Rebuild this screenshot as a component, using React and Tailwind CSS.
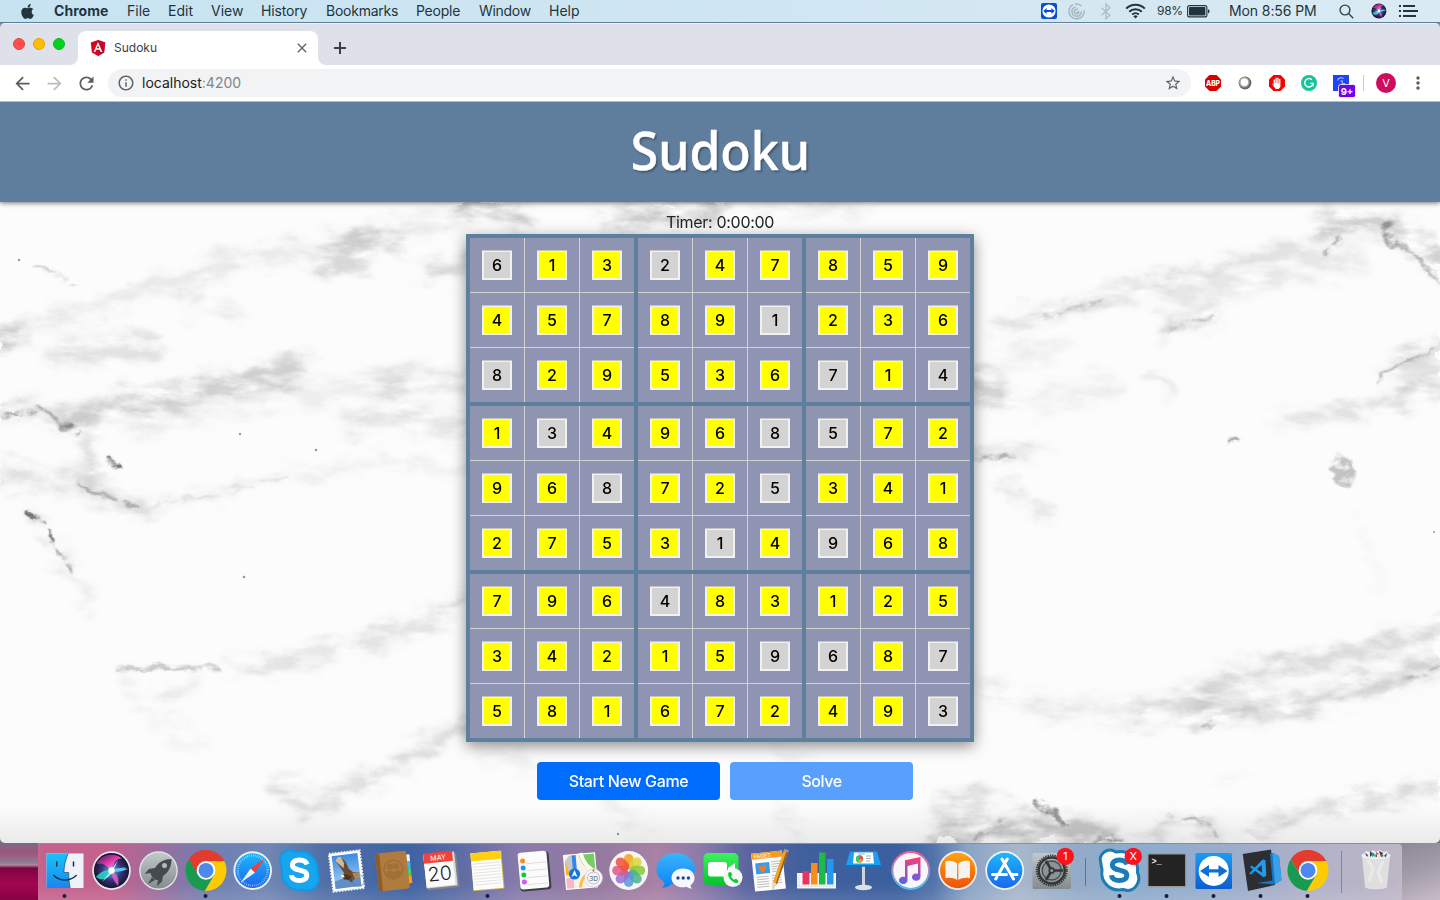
import React from 'react';
import { FaApple } from 'react-icons/fa';
import {
  MdArrowBack,
  MdArrowForward,
  MdRefresh,
  MdInfoOutline,
  MdStarBorder,
  MdMoreVert,
  MdClose,
} from 'react-icons/md';

const ROWS = [
  '613247859',
  '457891236',
  '829536714',
  '134968572',
  '968725341',
  '275314968',
  '796483125',
  '342159687',
  '581672493',
];

// g = given clue, . = solved cell
const CLUES = [
  'g..g.....',
  '.....g...',
  'g.....g.g',
  '.g...gg..',
  '..g..g...',
  '....g.g..',
  '...g.....',
  '.....gg.g',
  '........g',
];

const TRIPLE = [0, 1, 2];

function MenuBar() {
  return (
    <div className="flex h-[23px] items-center border-b border-[#5f7f9b] bg-gradient-to-r from-[#c7e3f1] via-[#cfe6f2] to-[#d9eaf2] text-[14px] leading-[22px] text-[#1d3541]">
      <div className="flex w-[54px] pl-5">
        <FaApple className="h-[17px] w-[15px] text-[#22353f]" />
      </div>
      <span className="w-[73px] font-bold tracking-[0.05px]">Chrome</span>
      <span className="w-[41px]">File</span>
      <span className="w-[43px]">Edit</span>
      <span className="w-[50px]">View</span>
      <span className="w-[65px] tracking-[-0.15px]">History</span>
      <span className="w-[90px] tracking-[-0.25px]">Bookmarks</span>
      <span className="w-[63px] tracking-[-0.25px]">People</span>
      <span className="w-[70px] tracking-[-0.3px]">Window</span>
      <span>Help</span>
      <div className="ml-auto flex h-[22px] items-center">
        <svg width="16" height="16" viewBox="0 0 16 16">
          <rect width="16" height="16" rx="2" fill="#0b4fd0" />
          <circle cx="8" cy="8" r="6.6" fill="#fff" />
          <path d="M2.2 8 5.6 5v2h4.8V5l3.4 3-3.4 3V9H5.6v2z" fill="#0b4fd0" />
        </svg>
        <svg className="ml-[11px]" width="17" height="17" viewBox="0 0 17 17" fill="none" stroke="#a7b8c2" strokeWidth="1.5" strokeLinecap="round">
          <path d="M4.500 1.800a7.600 7.600 0 1 0 11.700 6.200" />
          <path d="M7 4.100a4.700 4.700 0 1 0 6.300 5" />
          <path d="M9.500 6.500a2.300 2.300 0 1 0 1.300 2.500h-2" />
          <path d="M7.500 1.100a7.200 7.200 0 0 1 5.500 1.500" />
        </svg>
        <svg className="ml-[15px]" width="12" height="17" viewBox="0 0 12 17" fill="none" stroke="#aabcc6" strokeWidth="1.2">
          <path d="m1.5 4.7 8.4 7.6L6 15.8V1.2l3.9 3.5-8.4 7.6" />
        </svg>
        <svg className="ml-[13px]" width="21" height="16" viewBox="0 0 21 16" fill="none" stroke="#22353f" strokeWidth="2">
          <path d="M1.2 5.6a13.2 13.2 0 0 1 18.6 0" />
          <path d="M4.2 8.7a9 9 0 0 1 12.6 0" />
          <path d="M7.2 11.5a4.8 4.8 0 0 1 6.6 0" />
          <path d="M10.5 15.6 8.4 13.4a3 3 0 0 1 4.2 0z" fill="#22353f" stroke="none" />
        </svg>
        <span className="ml-[11px] w-[30px] text-[12px] tracking-[-0.3px]">98%</span>
        <svg width="24" height="13" viewBox="0 0 24 13">
          <rect x=".6" y=".6" width="19.3" height="11.3" rx="2" fill="none" stroke="#22353f" strokeWidth="1.1" />
          <rect x="2" y="2" width="16.4" height="8.5" rx=".8" fill="#22353f" />
          <path d="M21 4.2c2 .6 2 3.6 0 4.2z" fill="#22353f" />
        </svg>
        <span className="ml-[18px] w-[110px] tracking-[-0.1px]">Mon 8:56 PM</span>
        <svg width="15" height="15" viewBox="0 0 15 15" fill="none" stroke="#33454f" strokeWidth="1.4">
          <circle cx="6" cy="6" r="4.9" />
          <path d="m9.6 9.6 4.6 4.6" />
        </svg>
        <svg className="ml-[17px]" width="16" height="16" viewBox="5 8 37.500 37.500">
          <SiriBall />
        </svg>
        <svg className="ml-[12px] mr-[22px]" width="19" height="12" viewBox="0 0 19 12" fill="#22353f">
          <path d="M0 0h2v2H0zM0 5h2v2H0zM0 10h2v2H0zM4 0h12v2H4zM4 5h15v2H4zM4 10h13v2H4z" />
        </svg>
      </div>
    </div>
  );
}

function TabStrip() {
  return (
    <div className="flex h-[42px] rounded-t-[5px] border-t border-[#eef0f3] bg-[#dee1e9]">
      <div className="flex w-[70px] items-center gap-2 pb-[1px] pl-[13px]">
        <span className="h-3 w-3 rounded-full border border-[#e2463f] bg-[#ff4f48]" />
        <span className="h-3 w-3 rounded-full border border-[#e0a500] bg-[#ffbd00]" />
        <span className="h-3 w-3 rounded-full border border-[#14b81f] bg-[#00d31f]" />
      </div>
      <svg className="mt-auto" width="8" height="8" viewBox="0 0 8 8">
        <path d="M8 0v8H0a8 8 0 0 0 8-8z" fill="#fff" />
      </svg>
      <div className="mt-[7px] flex w-[240px] items-center rounded-t-lg bg-white pl-3 pr-[8px]">
        <svg width="16" height="16" viewBox="0 0 16 16">
          <path d="m8 0 7.2 2.6-1.1 9.8L8 16l-6.1-3.6L.8 2.6z" fill="#e0001f" />
          <path d="m8 0 7.2 2.6-1.1 9.8L8 16z" fill="#bd0a2c" />
          <path d="M8 2 3.6 12h1.8l.9-2.300h3.400l.9 2.300h1.800zm0 3.300 1.200 3H6.800z" fill="#fff" />
        </svg>
        <span className="ml-2 text-[12px] text-[#3c4043]">Sudoku</span>
        <MdClose className="ml-auto h-4 w-4 text-[#5f6368]" />
      </div>
      <svg className="mt-auto" width="8" height="8" viewBox="0 0 8 8">
        <path d="M0 0v8h8a8 8 0 0 1-8-8z" fill="#fff" />
      </svg>
      <div className="flex items-center pl-2 pt-[7px]">
        <svg width="12" height="12" viewBox="0 0 12 12">
          <path d="M5 0h2v5h5v2H7v5H5V7H0V5h5z" fill="#3c4043" />
        </svg>
      </div>
    </div>
  );
}

function Slot({ children }) {
  return <div className="flex w-8 items-center justify-center">{children}</div>;
}

function Toolbar() {
  return (
    <div className="flex h-[37px] border-b border-[#b9bcc0] bg-white px-[6px]">
      <Slot><MdArrowBack className="h-[21px] w-[21px] text-[#5a5d61]" /></Slot>
      <Slot><MdArrowForward className="h-[21px] w-[21px] text-[#bbbdbf]" /></Slot>
      <Slot><MdRefresh className="h-[21px] w-[21px] text-[#5a5d61]" /></Slot>
      <div className="mx-[6px] mt-1 flex h-7 flex-1 items-center rounded-full bg-[#f1f3f4] pl-[9px] pr-[9px]">
        <MdInfoOutline className="h-[18px] w-[18px] text-[#5f6368]" />
        <span className="ml-[7px] pb-[1px] text-[14px] leading-5 text-[#202124]">
          localhost<span className="text-[#80868b]">:4200</span>
        </span>
        <MdStarBorder className="ml-auto h-[18px] w-[18px] text-[#5f6368]" />
      </div>
      <Slot>
        <svg width="18" height="18" viewBox="0 0 18 18">
          <path d="M5.5 1h7L17 5.500v7L12.500 17h-7L1 12.500v-7z" fill="#d70000" />
          <text x="9" y="11.700" textAnchor="middle" fontSize="7.200" fontWeight="800" fill="#fff" textLength="14" lengthAdjust="spacingAndGlyphs">ABP</text>
        </svg>
      </Slot>
      <Slot>
        <svg width="14" height="14" viewBox="0 0 14 14">
          <circle cx="7" cy="7" r="6.400" fill="#666" />
          <circle cx="6.300" cy="6.300" r="5.200" fill="#a9a9a9" />
          <circle cx="6.400" cy="6.200" r="3.700" fill="#fff" />
        </svg>
      </Slot>
      <Slot>
        <svg width="18" height="18" viewBox="0 0 18 18">
          <path d="M5.500 1h7L17 5.500v7L12.500 17h-7L1 12.500v-7z" fill="#f60000" />
          <path d="M5.600 13V5.500h1.300V9h.5V3.800h1.400V9h.5V3.800h1.300V9h.5V5h1.300v8L10.600 15H7.800L4.600 11V8.600z" fill="#fff" />
        </svg>
      </Slot>
      <Slot>
        <svg width="16" height="16" viewBox="0 0 16 16">
          <circle cx="8" cy="8" r="8" fill="#15c39a" />
          <path d="M10.800 4.700a4.200 4.200 0 1 0 1.300 3.700H9.200m2.900 0v2.800" fill="none" stroke="#fff" strokeWidth="1.400" />
        </svg>
      </Slot>
      <Slot>
        <svg className="overflow-visible" width="16" height="16" viewBox="0 0 16 16">
          <rect width="16" height="16" fill="#1d45f5" />
          <path d="M4.500 5.500C5 3 8 2 10.500 3.500M7.500 6h1.700v5M10 8.500h2" fill="none" stroke="#b5c6ff" strokeWidth="1.100" />
          <rect x="5.500" y="9.500" width="17" height="13" rx="2" fill="#7400f0" stroke="#fff" strokeWidth=".8" />
          <text x="14" y="19.800" textAnchor="middle" fontSize="9.500" fontWeight="700" fill="#fff">9+</text>
        </svg>
      </Slot>
      <div className="flex w-[13px] items-center justify-center">
        <span className="h-4 w-px bg-[#c9cbce]" />
      </div>
      <Slot>
        <span className="flex h-5 w-5 items-center justify-center rounded-full bg-[#d00a5c] text-[11px] text-white">V</span>
      </Slot>
      <Slot><MdMoreVert className="h-[20px] w-[20px] text-[#5a5d61]" /></Slot>
    </div>
  );
}

// Veined stone texture behind the page content
function Marble() {
  return (
    <svg className="absolute inset-0 h-full w-full" viewBox="0 202 1440 641" preserveAspectRatio="none">
      <defs>
        <filter id="cloud" x="0" y="202" width="1440" height="641" filterUnits="userSpaceOnUse" colorInterpolationFilters="sRGB">
          <feTurbulence type="fractalNoise" baseFrequency="0.03 0.05" numOctaves="6" seed="8" result="n" />
          <feGaussianBlur in="SourceGraphic" stdDeviation="6" result="b" />
          <feDisplacementMap in="b" in2="n" scale="32" xChannelSelector="R" yChannelSelector="G" result="d" />
          <feTurbulence type="fractalNoise" baseFrequency="0.03 0.08" numOctaves="6" seed="21" result="g" />
          <feColorMatrix in="g" type="matrix" values="0 0 0 0 0  0 0 0 0 0  0 0 0 0 0  0 0 2.3 0 -0.5" result="m" />
          <feComposite in="d" in2="m" operator="in" />
        </filter>
        <filter id="vein" x="0" y="202" width="1440" height="641" filterUnits="userSpaceOnUse" colorInterpolationFilters="sRGB">
          <feTurbulence type="fractalNoise" baseFrequency="0.06 0.09" numOctaves="4" seed="3" result="n" />
          <feGaussianBlur in="SourceGraphic" stdDeviation="1.1" result="b" />
          <feDisplacementMap in="b" in2="n" scale="12" xChannelSelector="R" yChannelSelector="G" result="d" />
          <feColorMatrix in="n" type="matrix" values="0 0 0 0 0  0 0 0 0 0  0 0 0 0 0  0 0 3.5 0 -1" result="m" />
          <feComposite in="d" in2="m" operator="in" />
        </filter>
        <linearGradient id="foot" x1="0" y1="0" x2="0" y2="1">
          <stop offset="0" stopColor="#000" stopOpacity="0" />
          <stop offset="1" stopColor="#000" stopOpacity=".07" />
        </linearGradient>
      </defs>
      <rect y="202" width="1440" height="641" fill="#fcfcfc" />
      <g filter="url(#cloud)" opacity=".85" fill="none" stroke="#959595" strokeLinecap="round" strokeLinejoin="round">
        <g transform="translate(0 -50) scale(1 1.263)">
          <path d="M0 307 26 300" strokeWidth="15" opacity=".6" />
          <path d="M45 293 100 283 190 258 240 245 330 232 466 212" strokeWidth="14" opacity=".24" />
          <path d="M55 318 150 315" strokeWidth="22" opacity=".3" />
          <path d="M325 243 355 246M360 230 390 232" strokeWidth="26" opacity=".42" />
          <path d="M425 255 466 248" strokeWidth="14" opacity=".45" />
          <path d="M195 275 230 285" strokeWidth="18" opacity=".2" />
          <path d="M0 366 40 362 75 377" strokeWidth="9" opacity=".5" />
          <path d="M75 368 150 358 225 342 275 338 305 328" strokeWidth="20" opacity=".5" />
          <path d="M130 375 200 365 300 350 400 340" strokeWidth="22" opacity=".16" />
          <path d="M350 372 410 370 466 380M380 345 466 340" strokeWidth="20" opacity=".25" />
          <path d="M0 415 60 418 100 430 140 441" strokeWidth="18" opacity=".3" />
          <path d="M86 385 90 425" strokeWidth="16" opacity=".35" />
          <path d="M28 448 50 465 72 492 90 520" strokeWidth="12" opacity=".2" />
          <path d="M140 441 210 432 290 415 370 407 466 410" strokeWidth="7" opacity=".24" />
          <path d="M240 568 280 564 345 553 430 530 466 512" strokeWidth="14" opacity=".3" />
          <path d="M165 592 195 580" strokeWidth="12" opacity=".25" />
          <path d="M275 657 305 685 360 660 430 630 466 612" strokeWidth="12" opacity=".42" />
          <path d="M290 655 320 665M120 570 150 610 200 628" strokeWidth="10" opacity=".16" />
          <path d="M1000 296 1090 278 1140 265 1220 250 1320 230 1360 215" strokeWidth="10" opacity=".38" />
          <path d="M1140 272 1220 268 1300 250 1360 245" strokeWidth="20" opacity=".24" />
          <path d="M1160 300 1215 287" strokeWidth="13" opacity=".45" />
          <path d="M1325 218 1390 214 1440 245" strokeWidth="20" opacity=".5" />
          <path d="M975 345 1000 350" strokeWidth="28" opacity=".45" />
          <path d="M1010 325 1060 310M1030 358 1110 345" strokeWidth="18" opacity=".16" />
          <path d="M975 400 1040 396M1003 424 1045 447" strokeWidth="9" opacity=".36" />
          <path d="M1155 335 1174 353" strokeWidth="5" opacity=".5" />
          <path d="M1280 374 1360 362 1440 350" strokeWidth="13" opacity=".32" />
          <path d="M1385 332 1440 316M1405 348 1440 335" strokeWidth="16" opacity=".38" />
          <path d="M1358 455 1385 508" strokeWidth="6" opacity=".13" />
          <path d="M975 578 1050 600 1150 605" strokeWidth="15" opacity=".22" />
          <path d="M1140 602 1200 590 1240 573 1340 560 1440 538" strokeWidth="18" opacity=".4" />
          <path d="M1195 605 1280 602 1350 587 1440 565" strokeWidth="18" opacity=".48" />
          <path d="M1210 595 1260 590" strokeWidth="22" opacity=".18" />
        </g>
        <path d="M470 205 520 218M610 222 715 210" strokeWidth="24" opacity=".55" />
        <path d="M760 213 860 207" strokeWidth="12" opacity=".22" />
        <path d="M480 745 540 770M600 795 650 830M780 745 810 760M780 808 800 835" strokeWidth="11" opacity=".2" />
        <path d="M940 838 985 824 1060 830 1110 842" strokeWidth="26" opacity=".62" />
        <path d="M935 808 985 798" strokeWidth="16" opacity=".42" />
        <path d="M1145 838 1175 825 1215 833" strokeWidth="18" opacity=".36" />
        <path d="M1250 835 1320 808 1400 795 1440 786" strokeWidth="13" opacity=".5" />
        <path d="M1225 778 1245 772" strokeWidth="8" opacity=".15" />
      </g>
      <g filter="url(#vein)" fill="none" stroke="#555" strokeLinecap="round">
        <g transform="translate(0 -50) scale(1 1.263)">
          <path d="M0 370 38 362 58 372 77 381" strokeWidth="3" opacity=".45" />
          <path d="M60 376 76 381" strokeWidth="5" opacity=".5" />
          <path d="M34 250 75 264" strokeWidth="2.500" opacity=".3" />
          <path d="M28 446 50 460 52 468" strokeWidth="3" opacity=".95" />
          <path d="M52 468 72 492" strokeWidth="3" opacity=".5" />
          <path d="M109 402 119 410" strokeWidth="3.500" opacity=".95" />
          <path d="M80 423 100 431 140 442" strokeWidth="3" opacity=".42" />
          <path d="M140 442 210 432 290 417" strokeWidth="2.500" opacity=".14" />
          <path d="M118 568 150 568 220 568" strokeWidth="3.500" opacity=".32" />
          <path d="M1045 291 1100 278M1170 302 1215 288" strokeWidth="3" opacity=".3" />
          <path d="M1387 220 1392 232" strokeWidth="11" opacity=".5" />
          <path d="M1395 230 1420 245 1440 266M1325 240 1340 228" strokeWidth="3.500" opacity=".38" />
          <path d="M1378 342 1385 332 1420 322 1440 312" strokeWidth="2.500" opacity=".4" />
          <path d="M975 403 1012 400" strokeWidth="4" opacity=".38" />
          <path d="M1228 389 1234 387 1239 388" strokeWidth="2" opacity=".7" />
          <path d="M1341 410 1346 416" strokeWidth="20" opacity=".34" />
          <path d="M1205 614 1212 613M1405 577 1440 568" strokeWidth="4" opacity=".3" />
        </g>
        <path d="M1036 802 1055 812 1062 826" strokeWidth="6" opacity=".6" />
        <path d="M1170 815 1200 820 1215 833M1095 842 1118 838" strokeWidth="4" opacity=".4" />
        <path d="M975 838 1000 822" strokeWidth="4" opacity=".35" />
      </g>
      <g fill="#999">
        <circle cx="19" cy="260" r="1.200" /><circle cx="244" cy="577" r="1.300" />
        <circle cx="316" cy="450" r="1.300" /><circle cx="240" cy="434" r="1.200" />
        <circle cx="618" cy="834" r="1.200" /><circle cx="1434" cy="532" r="1" />
      </g>
      <rect y="805" width="1440" height="38" fill="url(#foot)" />
    </svg>
  );
}

function Cell({ value, given }) {
  return (
    <div className="flex h-[54px] w-[54px] items-center justify-center bg-[#9094b3]">
      <div className="h-[30px] w-[30px] border-t border-[#c3c3c3]">
        <div
          className={
            'flex h-[29px] items-center justify-center border-2 border-t border-[#f1f1f1] text-[16px] font-medium text-black ' +
            (given ? 'bg-[#d3d3d3]' : 'bg-[#ffff00]')
          }
        >
          {value}
        </div>
      </div>
    </div>
  );
}

function Board() {
  return (
    <div className="grid w-[508px] grid-cols-3 gap-1 bg-[#5f7f9e] p-1 shadow-[0_4px_14px_rgba(0,0,0,0.45)]">
      {TRIPLE.map((br) =>
        TRIPLE.map((bc) => (
          <div key={br + '-' + bc} className="grid grid-cols-3 gap-px bg-[#d3d3d3]">
            {TRIPLE.map((r) =>
              TRIPLE.map((c) => {
                const row = br * 3 + r;
                const col = bc * 3 + c;
                return <Cell key={row + '-' + col} value={ROWS[row][col]} given={CLUES[row][col] === 'g'} />;
              })
            )}
          </div>
        ))
      )}
    </div>
  );
}

function Page() {
  return (
    <div className="relative flex h-[741px] flex-col overflow-hidden rounded-b-[5px]">
      <div className="relative z-10 flex h-[100px] items-center justify-center bg-[#5f7d9c] pb-[3px] shadow-[0_1px_5px_rgba(0,0,0,0.55)]">
        <h1 className="scale-x-[0.95] font-['Noto_Sans','Open_Sans',sans-serif] text-[52.5px] font-medium leading-none text-white [-webkit-text-stroke:0.5px_white] [text-shadow:2px_2px_2px_rgba(0,0,0,0.3)]">
          Sudoku
        </h1>
      </div>
      <div className="relative flex flex-1 flex-col items-center">
        <Marble />
        <div className="relative flex h-8 items-center pt-2 text-[16px] leading-6 tracking-[-0.3px] text-[#212529]">Timer: 0:00:00</div>
        <div className="relative">
          <Board />
        </div>
        <div className="relative mt-5 flex gap-[10px] pl-[10px] text-[16px] font-medium text-white">
          <button className="h-[38px] w-[183px] rounded bg-[#006dff] tracking-[-0.35px]">Start New Game</button>
          <button className="h-[38px] w-[183px] rounded bg-[#006dff]/65 tracking-[-0.45px]">Solve</button>
        </div>
      </div>
    </div>
  );
}

function SiriBall() {
  return (
    <g>
      <defs>
        <radialGradient id="siri" cx=".5" cy=".5" r=".5">
          <stop offset="0" stopColor="#5fb8dc" /><stop offset=".55" stopColor="#39337c" /><stop offset="1" stopColor="#15142f" />
        </radialGradient>
        <linearGradient id="siriPink" x1="0" y1="0" x2="1" y2="1">
          <stop offset="0" stopColor="#3a1b5c" /><stop offset=".5" stopColor="#ff3bb4" /><stop offset="1" stopColor="#c9f6ff" />
        </linearGradient>
      </defs>
      <circle cx="23.500" cy="26.600" r="19.300" fill="#e9e9ee" />
      <circle cx="23.500" cy="26.600" r="17.600" fill="url(#siri)" />
      <path d="M9 20C12 10 28 8 34 15c-6-1-8 4-11 12C19 21 14 18 9 20z" fill="url(#siriPink)" opacity=".9" />
      <path d="M8 33c6-8 14-7 30-10-6 4-10 4-14 5-4 7-9 10-16 5z" fill="#2adcc6" opacity=".85" />
      <path d="M23 27c6 2 9 8 7 15-3-4-7-9-7-15z" fill="#f062d0" opacity=".8" />
      <path d="M23 27c5-3 11-4 17-2-6 2-10 4-17 2z" fill="#61c6ff" />
      <circle cx="23.500" cy="26.500" r="3.200" fill="#fff" opacity=".95" />
      <path d="m23 27-9 11 10-9zM23 26l7-10-5 11z" fill="#fff" opacity=".75" />
    </g>
  );
}

const Finder = () => (
  <g>
    <path d="M5.500 9.500h37v34.400h-37z" fill="#eef2f8" />
    <path d="M5.500 9.500h21.700c-2.600 6-4 12-4.300 19h4.800c0 5 .3 10 1.500 15.400H5.500z" fill="url(#finder)" />
    <path d="M27.200 9.500c-2.600 6-4 12-4.300 19h4.800c0 5 .3 10 1.500 15.400" fill="none" stroke="#173b60" strokeWidth=".6" />
    <path d="M15.700 18v4M32.500 18v4M12.800 31.500c6 6 16 6 22.400 0" fill="none" stroke="#15304d" strokeWidth="1.500" strokeLinecap="round" />
  </g>
);

const Rocket = () => (
  <g>
    <circle cx="23.500" cy="26.600" r="19.300" fill="#e3e7e8" />
    <circle cx="23.500" cy="26.600" r="18" fill="url(#silver)" />
    <path d="M36.500 15c-7 0-13 3-16.500 9l-6 1-4.500 5 6-1 1 3 3.500 3.500 3 .8-1 6 5-4.700 1-5.500c6-4 8.500-10 8.500-17.100z" fill="#454a4e" />
    <path d="m17 33-4 7 7-4z" fill="#454a4e" />
    <circle cx="29.500" cy="21.500" r="2.500" fill="#b5bcbf" />
  </g>
);

const Chrome = () => (
  <g transform="translate(24 26.400)">
    <path d="M18.300-9.200A20.500 20.500 0 0 0-17.100-11.300L-8 4.600 0-9.200z" fill="#e33b2e" />
    <path d="M18.300-9.200A20.500 20.500 0 0 0-17.100-11.300L-8 4.600 0-9.200z" fill="#fdcb02" transform="rotate(120)" />
    <path d="M18.300-9.200A20.500 20.500 0 0 0-17.100-11.300L-8 4.600 0-9.200z" fill="#189a50" transform="rotate(240)" />
    <circle r="9.300" fill="#fff" />
    <circle r="7.500" fill="#4b88f0" />
  </g>
);

const Safari = () => (
  <g>
    <circle cx="23.700" cy="26.600" r="19.300" fill="#eef0f3" />
    <circle cx="23.700" cy="26.600" r="17.400" fill="url(#blueBall)" />
    <circle cx="23.700" cy="26.600" r="15" fill="none" stroke="#d3efff" strokeWidth="2.200" strokeDasharray=".6 1.360" opacity=".8" />
    <path d="M35.800 14.500 21.600 24.400l4.300 4.300z" fill="#fb3b30" />
    <path d="M11.600 38.700 21.600 24.400l4.300 4.300z" fill="#f3f3f3" />
  </g>
);

const SkypeBlob = ({ fill, stroke, letter, strokeWidth }) => (
  <g>
    <path
      d="M5 20C1.500 9 12 3 20 8c13-3 23 8 21.500 20.500C46 38 38 49.500 27 45.500 14 48 4 38 6 25.500 5.500 23 5 21.500 5 20z"
      fill={fill}
      stroke={stroke}
      strokeWidth={strokeWidth}
    />
    <path d="M31 20.500c-1-3.300-4-4.600-7.600-4.600-4.200 0-7 2-7 5.200 0 6.600 14.400 3.400 14.400 10.100 0 3.600-3.200 5.300-7.400 5.300-4.400 0-7.600-2-8-5.300" fill="none" stroke={letter} strokeWidth="5" />
  </g>
);

const MailStamp = () => (
  <g transform="rotate(-7 23.500 27)">
    <path d="M8 8h31v38H8z" fill="#fff" stroke="#f4f4f4" strokeWidth="2" strokeDasharray="1.700 1.300" />
    <path d="M10.500 10.500h26v33h-26z" fill="url(#sky)" />
    <path d="M10.500 36c9-2 18-3 26-2v9.500h-26z" fill="#5f8fc5" />
    <path d="M14 16c1-4 4-5 6-3l4 5 2 7 4 4 6 1-1 5-5 1-3 3-3-3-4-1-3-4 4-2-3-6z" fill="#6b4b30" />
    <path d="M14 16c1-4 4-5 6-3l2 6-1 5z" fill="#cdbb9f" />
    <path d="m18 31 4-1 6 3-3 3-5-1z" fill="#4a3220" />
    <path d="m17 30 3 0 1 3-3 0z" fill="#f6f0e2" />
    <path d="m29 30 7 0-1 5-4 1z" fill="#c08b45" />
    <circle cx="34" cy="38" r="6" fill="none" stroke="#56739d" strokeWidth="1" opacity=".5" />
  </g>
);

const Contacts = () => (
  <g transform="rotate(-6 23.500 27)">
    <path d="M36 12h5v7h-5z" fill="#f4f4f4" /><path d="M36 19h5v7h-5z" fill="#38bdf0" />
    <path d="M36 26h5v7h-5z" fill="#4ccf6b" /><path d="M36 33h5v8h-5z" fill="#ff9e1b" />
    <rect x="7" y="8" width="31" height="38" rx="2" fill="#b07b3e" />
    <path d="M7 10c0-1 1-2 2-2h2v38H9c-1 0-2-1-2-2z" fill="#8c5d2a" />
    <circle cx="23.500" cy="25.500" r="9.500" fill="none" stroke="#996a34" strokeWidth="1" />
    <circle cx="20.500" cy="22.500" r="3" fill="#a07136" /><circle cx="26.500" cy="22.500" r="3" fill="#a07136" />
    <path d="M15 31c1-6 9-6 9-1 1-5 8-4 8 1-4 5-13 5-17 0z" fill="#a07136" />
  </g>
);

const Calendar = () => (
  <g transform="rotate(-6 23.500 27)">
    <path d="M9 11h32v34H9z" fill="#7d8389" />
    <path d="M8 9h31v34H8z" fill="#d9dcdf" />
    <path d="M8 9h29v33H8z" fill="#fafafa" />
    <path d="M8 8h29v10H8z" fill="#f2423c" />
    <text x="22.500" y="15.900" textAnchor="middle" fontSize="7.200" fill="#fff">MAY</text>
    <text x="22.500" y="36.500" textAnchor="middle" fontSize="19.500" fontWeight="300" fill="#222">20</text>
  </g>
);

const Notes = () => (
  <g transform="rotate(-5 23.500 27)">
    <path d="M8 8h31v38H8z" fill="#d2b24a" />
    <path d="M8 8h30v37H8z" fill="#fdfdfb" />
    <path d="M8 8h30v8H8z" fill="#ffcf10" />
    <path d="M9 19h28M9 22h28M9 25h28M9 28h28M9 31h28M9 34h28M9 37h28M9 40h28" stroke="#d4d4d0" strokeWidth=".6" />
  </g>
);

const Reminders = () => (
  <g transform="rotate(-5 23.500 27)">
    <rect x="8" y="8.500" width="31" height="38" rx="3" fill="#3b3e45" />
    <rect x="8" y="7.500" width="29" height="37" rx="3" fill="#fbfbfb" />
    <path d="M16 19h20M16 26h20M16 33h20M16 40h20" stroke="#ccc" strokeWidth=".6" />
    <circle cx="12.500" cy="16" r="2.500" fill="#ff8c1a" /><circle cx="12.500" cy="23" r="2.500" fill="#1e96f0" />
    <circle cx="12.500" cy="30" r="2.500" fill="#0fd12a" /><circle cx="12.500" cy="37" r="2.500" fill="#cf5cf0" />
  </g>
);

const Maps = () => (
  <g>
    <g transform="rotate(-5 23.500 27)">
      <path d="M7 10h31v34H7z" fill="#f6f2e7" />
      <path d="M22 10h16v19c-9-2-14-8-16-19z" fill="#77cc63" />
      <path d="M7 17 13 10h3v20H7z" fill="#c7c8cc" /><path d="M8 16l4 14H8z" fill="#ffb21e" />
      <path d="M7 33h8v11H7z" fill="#f8b8c8" />
      <path d="M17 30V10" stroke="#3486ea" strokeWidth="4" />
      <path d="M24 9c2 10 6 17 15 20" fill="none" stroke="#fffaf0" strokeWidth="4" />
      <path d="M21 44c1-8 5-12 9-13" fill="none" stroke="#ffbf3b" strokeWidth="3" />
      <path d="M7 10h31v34H7z" fill="none" stroke="#fff" strokeWidth="1.200" />
    </g>
    <circle cx="16.500" cy="30" r="5.600" fill="#1574e8" />
    <path d="m16.500 26 3 7-3-1.700-3 1.700z" fill="#fff" />
    <circle cx="35.500" cy="34" r="9" fill="#f7f7f8" stroke="#c5cad0" strokeWidth=".7" />
    <circle cx="35.500" cy="34" r="6" fill="none" stroke="#b0bdc8" strokeWidth="1" />
    <text x="35.500" y="36.500" textAnchor="middle" fontSize="6.500" fill="#555">3D</text>
    <circle cx="35.500" cy="26.500" r=".9" fill="#e33" />
  </g>
);

const PETALS = ['#f6a11b', '#d8d63a', '#8cc63f', '#4bb38b', '#5a97d8', '#9a6fd0', '#dc5a8a', '#f0533a'];
const Photos = () => (
  <g>
    <circle cx="23.700" cy="26.500" r="19.400" fill="#f6f6f6" />
    {PETALS.map((c, i) => (
      <rect key={c} x="18.900" y="10" width="9.600" height="15.500" rx="4.800" fill={c} opacity=".86" transform={'rotate(' + i * 45 + ' 23.700 26.500)'} />
    ))}
  </g>
);

const Messages = () => (
  <g>
    <path d="M24 9C12 9 4.500 16 4.500 25c0 6 3 10 8 13 .2 3-1 4.500-2.500 5.700 4 0 7-1.200 9.500-3.700C33 41.500 43 35 43 25 43 16 35 9 24 9z" fill="url(#msg)" />
    <path d="M31 24.500c7 0 11.500 4 11.500 9.500 0 3-1.500 5.500-4 7.200 0 1.500.8 2.600 1.600 3.400-2.300 0-4.300-.6-5.600-1.800C26 45 19.500 40 19.500 34c0-5.500 5-9.500 11.500-9.500z" fill="#f5f8fc" />
    <circle cx="26" cy="34" r="1.700" fill="#26469b" /><circle cx="31.200" cy="34" r="1.700" fill="#26469b" /><circle cx="36.400" cy="34" r="1.700" fill="#26469b" />
  </g>
);

const FaceTime = () => (
  <g>
    <rect x="4.500" y="9" width="35" height="32" rx="5" fill="url(#green)" />
    <rect x="9" y="18" width="19" height="14.500" rx="3" fill="#fff" />
    <path d="m29 24 7-5v13l-7-5z" fill="#fff" />
    <circle cx="34" cy="33.500" r="9.500" fill="#f4f7f5" />
    <path d="M29.500 28.500c-2 3 3.500 10.500 8 10.500 1.500 0 2.500-2 1.500-2.800l-2.200-1.500-1.700 1c-1.500-.8-2.500-2-3-3.500l1.200-1.500-1.300-2.600z" fill="#0ecb36" />
  </g>
);

const Pages = () => (
  <g>
    <g transform="rotate(-6 23.500 27)">
      <path d="M7 8h31v38H7z" fill="#fcfcfc" />
      <path d="M7 8h31v6H7z" fill="#f79a1f" />
      <text x="9" y="13.200" fontSize="5.400" fill="#fff">PAGES</text>
      <path d="M10 18h14v11H10z" fill="#3b9be8" /><path d="m13 20 4 2 4-2-1 5-3 3-3-3z" fill="#ef7c1d" />
      <path d="M26 18h10M26 20.500h10M26 23h10M26 25.500h10M26 28h10M10 32h12M10 34.500h12M10 37h12M10 39.500h12M10 42h12M25 32h10M25 34.500h10M25 37h10M25 39.500h10" stroke="#a5a5a5" strokeWidth=".7" />
    </g>
    <path d="m38 6 4 2-11 32-5 6 1-8z" fill="#f4a226" /><path d="m40.500 7 1.500 1-11 32-2 2z" fill="#9a5f19" />
    <path d="m27 38 4 2-5 6z" fill="#ddd" /><path d="m37.700 6.500 4.500 2 .7-2-4.200-2z" fill="#999" />
  </g>
);

const Numbers = () => (
  <g>
    <path d="M4 29h39v15.500H4z" fill="#f3f5f7" />
    <path d="M6 31v11M4 42h38" stroke="#b9bec4" strokeWidth=".8" strokeDasharray="1 1.200" />
    <path d="M9.500 27h7v13.500h-7z" fill="#e5365d" /><path d="M18 19h6.500v21.500H18z" fill="#f98c1b" />
    <path d="M26 8.500h6.500v32H26z" fill="#1fb84a" /><path d="M34 15h6.500v25.500H34z" fill="#2498ef" />
  </g>
);

const Keynote = () => (
  <g>
    <path d="M22 22h3v21h-3z" fill="#cdd4da" />
    <ellipse cx="23.500" cy="43.500" rx="8.500" ry="2.700" fill="#dbe1e6" />
    <path d="M10 7.500h27l4 13.500H6z" fill="#1f9df0" /><path d="M6 21h35v1.800H6z" fill="#0b74c7" />
    <path d="M14 8.500h19l1 11H13z" fill="#fff" />
    <circle cx="19.500" cy="15" r="3.700" fill="#35c26b" /><path d="M19.500 15v-3.700a3.700 3.700 0 0 1 3.600 4.500z" fill="#e94b6e" /><path d="M19.500 15 23 16a3.700 3.700 0 0 1-5 2.300z" fill="#f0a32c" />
    <path d="M26 12h5M26 14.500h5M26 17h4M18 10h7" stroke="#8896a5" strokeWidth=".8" />
  </g>
);

const ITunes = () => (
  <g>
    <circle cx="23.700" cy="26.500" r="19.400" fill="url(#itunesRing)" />
    <circle cx="23.700" cy="26.500" r="17.400" fill="#f8f6fa" />
    <path d="M18 16.300 33.500 13v19.800a4.300 3.600 0 1 1-2.500-3V19.600l-10.500 2.300v14.200a4.300 3.600 0 1 1-2.500-3z" fill="url(#note)" />
  </g>
);

const Books = () => (
  <g>
    <circle cx="23.700" cy="26.500" r="19.400" fill="#f2efec" />
    <circle cx="23.700" cy="26.500" r="17.700" fill="url(#orange)" />
    <path d="M23.100 19.500c-3-2.800-7.500-3.200-11.600-2.300v17c4.300-.8 8.600-.2 11.600 1.800zM24.300 19.500c3-2.800 7.500-3.200 11.600-2.300v17c-4.300-.8-8.600-.2-11.600 1.800z" fill="#f6f3f0" />
  </g>
);

const AppStore = () => (
  <g>
    <circle cx="23.700" cy="26.500" r="19.400" fill="#f0f2f5" />
    <circle cx="23.700" cy="26.500" r="17.700" fill="url(#blueBall)" />
    <path d="m21 15 11.500 20M26.300 15 17 31M14.700 35l1-1.600M11.500 30.500h14M31 30.500h5" stroke="#fff" strokeWidth="3" strokeLinecap="round" />
  </g>
);

const Badge = ({ children }) => (
  <g>
    <circle cx="37.300" cy="12.400" r="8.700" fill="#fa1420" />
    <text x="37.300" y="16.300" textAnchor="middle" fontSize="11" fill="#fff">{children}</text>
  </g>
);

const Settings = () => (
  <g>
    <rect x="4.500" y="9" width="38.500" height="36" rx="1.500" fill="url(#silver)" />
    <circle cx="23.700" cy="26.500" r="15" fill="none" stroke="#33373a" strokeWidth="2" strokeDasharray="1.400 .956" />
    <circle cx="23.700" cy="26.500" r="13" fill="none" stroke="#33373a" strokeWidth="2.500" />
    <circle cx="23.700" cy="26.500" r="11" fill="#8e9496" />
    <circle cx="23.700" cy="26.500" r="9.500" fill="none" stroke="#4a4e51" strokeWidth="1.300" />
    <path d="M23.700 26.500 18 17M23.700 26.500 18 36M23.700 26.500H35" stroke="#33373a" strokeWidth="2.600" />
    <circle cx="23.700" cy="26.500" r="3.200" fill="#33373a" /><circle cx="23.700" cy="26.500" r="1.600" fill="#8e9496" />
    <Badge>1</Badge>
  </g>
);

const SkypeBusiness = () => (
  <g>
    <SkypeBlob fill="#fbfdff" stroke="#1c7cb4" letter="#1c7cb4" strokeWidth="3" />
    <Badge>X</Badge>
  </g>
);

const Terminal = () => (
  <g>
    <rect x="4.300" y="9" width="39" height="34.500" rx="1.500" fill="#9c9c9c" />
    <rect x="5.500" y="10.500" width="36.600" height="31.500" fill="#232323" />
    <text x="8.500" y="19.500" fontSize="8.500" fontWeight="700" fill="#f0f0f0" fontFamily="Liberation Mono, monospace">&gt;_</text>
  </g>
);

const TeamViewer = () => (
  <g>
    <rect x="5.500" y="9" width="36.500" height="36" rx="1.500" fill="url(#tv)" />
    <circle cx="23.700" cy="26.900" r="15" fill="#fff" />
    <path d="m10 26.900 9-6v4.300h9.500v-4.300l9 6-9 6v-4.300H19v4.300z" fill="#0d6fd6" />
  </g>
);

const Code = () => (
  <g>
    <path d="M5.700 10 34 5.500 38 41 11 47z" fill="#2c2e33" />
    <path d="m33 10 3-1 6 3 2.500 24-7 4.500-18-1.500 16-2.500z" fill="#1577c4" />
    <path d="m35.500 10 2-.5 4.500 2.500 2.500 24-6.500 4z" fill="#3ba0ea" />
    <path d="m25.500 15.500 3 .8.800 15.500-2.800 1.400L13 23l1.500-1.500L25 28.500l-.4-7.500L14 30.500l-1.800-1z" fill="#219bea" />
  </g>
);

const Trash = () => (
  <g>
    <path d="M10 12h28l-3 31c-.5 3-21.500 3-22 0z" fill="#e0e1e2" opacity=".95" />
    <path d="m16 16 5 9-4 12M31 17l-5 11 4 11" fill="none" stroke="#f8f8f8" strokeWidth="3" opacity=".45" />
    <ellipse cx="24" cy="11.500" rx="14.500" ry="3.500" fill="#f5f5f5" />
    <path d="m11 11 3-4 4 1 3-2 3 2 4-2 3 2 4-1 2 5-6 3-7-1-6 1z" fill="#e7e9ea" />
    <path d="m13 9 3 2-1 2zM18 7l3 3-3 3zM27 7l4 2-2 4zM32 12l3-3-1 4zM22 12l3-1 0 2z" fill="#373b3e" />
    <path d="m20 8 4 3-4 2z" fill="#31a58a" /><path d="m29 10 3 2-3 1z" fill="#3565b5" /><path d="m24 8 3 2-3 1z" fill="#c45f3c" />
  </g>
);

const Siri = () => <SiriBall />;
const Skype = () => <SkypeBlob fill="#17a5ef" stroke="#1199e3" letter="#fff" strokeWidth="2" />;

const DOCK_MAIN = [
  [Finder, true], [Siri], [Rocket], [Chrome, true], [Safari], [Skype], [MailStamp], [Contacts],
  [Calendar], [Notes, true], [Reminders], [Maps], [Photos], [Messages], [FaceTime], [Pages],
  [Numbers], [Keynote], [ITunes], [Books], [AppStore], [Settings],
];
const DOCK_EXTRA = [[SkypeBusiness, true], [Terminal, true], [TeamViewer, true], [Code, true], [Chrome, true]];

function DockIcon({ Icon, running }) {
  return (
    <svg className="block w-[47px] shrink-0" width="47" height="56" viewBox="0 0 47 56">
      <Icon />
      {running ? <circle cx="23.500" cy="52" r="2" fill="#1c1a3a" /> : null}
    </svg>
  );
}

function Gradient({ id, from, to }) {
  return (
    <linearGradient id={id} x1="0" y1="0" x2="0" y2="1">
      <stop offset="0" stopColor={from} />
      <stop offset="1" stopColor={to} />
    </linearGradient>
  );
}

function Dock() {
  return (
    <div className="flex h-[56px] w-[1364px] rounded-t-[4px] bg-[linear-gradient(90deg,#c4628d_0px,#c4628d_70px,#a06b9c_115px,#7080b0_170px,#7086b4_230px,#516fa8_285px,#3f62a3_370px,#5c6ca4_420px,#877aab_480px,#94799f_560px,#a981a5_620px,#8d7bab_660px,#5b659f_710px,#3f5f9d_770px,#3b5f9f_860px,#5272aa_895px,#8ba4c5_930px,#a8b7cb_980px,#93abc9_1040px,#8daccd_1110px,#9dadcb_1200px,#b1b2c8_1280px,#beb6c6_1364px)] pl-[2.5px] shadow-[inset_0_-12px_14px_-4px_rgba(255,255,255,0.12)]">
      <svg className="absolute" width="0" height="0">
        <defs>
          <Gradient id="finder" from="#16c3fb" to="#1a86ee" />
          <Gradient id="silver" from="#c1c9ca" to="#838b8e" />
          <Gradient id="blueBall" from="#1cb8fb" to="#1a66ee" />
          <Gradient id="sky" from="#3b8be0" to="#a9d3f5" />
          <Gradient id="msg" from="#3bb5fc" to="#0b82f5" />
          <Gradient id="green" from="#3df35d" to="#07c42c" />
          <Gradient id="orange" from="#ffa40c" to="#f0500a" />
          <Gradient id="note" from="#fb3d74" to="#5663f2" />
          <Gradient id="itunesRing" from="#fb5a8c" to="#42c4f8" />
          <Gradient id="tv" from="#1c9af2" to="#0b5fd0" />
        </defs>
      </svg>
      {DOCK_MAIN.map(([Icon, running], i) => (
        <DockIcon key={i} Icon={Icon} running={running} />
      ))}
      <div className="flex w-[21px] justify-center pt-[14px]">
        <span className="h-[28px] w-px bg-[#5f7296]" />
      </div>
      {DOCK_EXTRA.map(([Icon, running], i) => (
        <DockIcon key={i} Icon={Icon} running={running} />
      ))}
      <div className="flex w-[21px] justify-center pt-[7px]">
        <span className="h-[42px] w-px bg-[#7d86a3]" />
      </div>
      <DockIcon Icon={Trash} />
    </div>
  );
}

export default function App() {
  return (
    <div className="flex h-[900px] w-[1440px] flex-col overflow-hidden bg-[#8f8a9c] font-['Inter','Liberation_Sans',sans-serif]">
      <MenuBar />
      <div className="bg-[#6f8ba5]">
        <TabStrip />
      </div>
      <Toolbar />
      <div className="bg-[#77708c]">
        <Page />
      </div>
      <div className="flex flex-1 items-end justify-between">
        <div className="h-full w-[38px] bg-[linear-gradient(180deg,#7b6a88_0px,#a0557a_10px,#8c7f92_20px,#b08a9c_22px,#7d0440_25px,#a3064f_40px,#8a0344_56px)]" />
        <Dock />
        <div className="h-full w-[38px] bg-[linear-gradient(160deg,#8d8896,#a29daa_50%,#c9bcc8)]" />
      </div>
    </div>
  );
}
